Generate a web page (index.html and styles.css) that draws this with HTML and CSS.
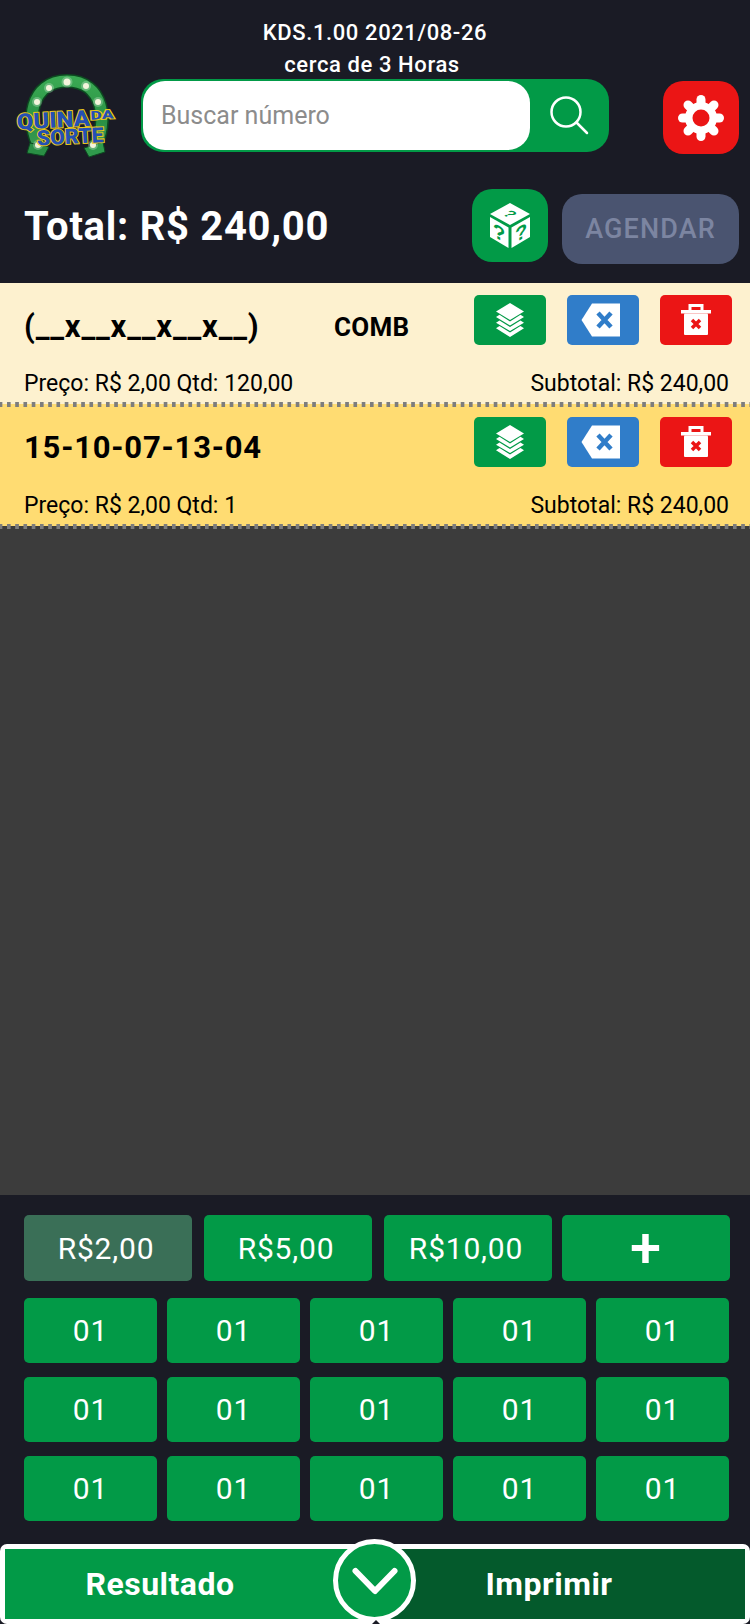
FILE: index.html
```html
<!DOCTYPE html>
<html lang="pt-BR">
<head>
    <meta charset="UTF-8">
    <meta name="viewport" content="width=device-width, initial-scale=1.0">
    <title>Quina da Sorte</title>
    <link rel="stylesheet" href="styles.css">
</head>
<body>
    <header class="header">
        <div class="version">
            <div>KDS.1.00 2021/08-26</div>
            <div class="version-sub">cerca de 3 Horas</div>
        </div>

        <div class="search-row">
            <svg class="logo" viewBox="0 0 100 85">
                <defs>
                    <linearGradient id="shoe" x1="0" y1="0" x2="0" y2="1">
                        <stop offset="0" stop-color="#39a852"/>
                        <stop offset="0.6" stop-color="#2a9145"/>
                        <stop offset="1" stop-color="#3a9a55"/>
                    </linearGradient>
                </defs>
                <path d="M24 75 C9 50 14 8 51 8 C88 8 93 50 78 75" fill="none" stroke="#0c4a20" stroke-width="14"/>
                <path d="M24 75 C9 50 14 8 51 8 C88 8 93 50 78 75" fill="none" stroke="url(#shoe)" stroke-width="11"/>
                <polygon points="14,70 33,74 28,83 11,80" fill="#2a8f45" stroke="#0c4a20"/>
                <polygon points="68,75 87,69 89,79 73,84" fill="#2f9a4c" stroke="#0c4a20"/>
                <g fill="#fff" opacity="0.25">
                    <circle cx="51" cy="9" r="5.5"/>
                    <circle cx="33" cy="15" r="5"/>
                    <circle cx="70" cy="13" r="5"/>
                    <circle cx="21" cy="29" r="5"/>
                    <circle cx="82" cy="29" r="5"/>
                    <circle cx="22" cy="72" r="5"/>
                    <circle cx="77" cy="72" r="5"/>
                </g>
                <g fill="#f4f4dc">
                    <circle cx="51" cy="9" r="3.5"/>
                    <circle cx="33" cy="15" r="3"/>
                    <circle cx="70" cy="13" r="3"/>
                    <circle cx="21" cy="29" r="3"/>
                    <circle cx="82" cy="29" r="3"/>
                    <circle cx="22" cy="72" r="3"/>
                    <circle cx="77" cy="72" r="3"/>
                </g>
                <g class="logo-text" transform="rotate(-3 50 50)">
                    <text x="1" y="54" textLength="73" lengthAdjust="spacingAndGlyphs" font-size="22">QUINA</text>
                    <text x="75" y="48" textLength="23" lengthAdjust="spacingAndGlyphs" font-size="12">DA</text>
                    <text x="20" y="71" textLength="67" lengthAdjust="spacingAndGlyphs" font-size="21">SORTE</text>
                </g>
            </svg>

            <div class="search-box">
                <div class="search-input">Buscar número</div>
                <button class="search-btn">
                    <svg width="44" height="44" viewBox="0 0 44 44" fill="none" stroke="#fff" stroke-width="2.5" stroke-linecap="round">
                        <circle cx="18" cy="18" r="14.5"/>
                        <path d="M28.5 28.5 L39 39"/>
                    </svg>
                </button>
            </div>

            <button class="gear-btn">
                <svg width="46" height="46" viewBox="-23 -23 46 46">
                    <circle r="16" fill="#fff"/>
                    <g stroke="#fff" stroke-width="9" stroke-linecap="round">
                        <path d="M0 -18.5 V18.5"/>
                        <path d="M-18.5 0 H18.5"/>
                        <path d="M-13 -13 L13 13"/>
                        <path d="M-13 13 L13 -13"/>
                    </g>
                    <circle r="8.5" fill="#eb1515"/>
                </svg>
            </button>
        </div>

        <div class="total-row">
            <div class="total">Total: R$ 240,00</div>
            <button class="dice-btn">
                <svg width="40" height="45" viewBox="0 0 40 45">
                    <polygon points="20,0 40,11 20,22 0,11" fill="#fff"/>
                    <polygon points="0,14 18.5,24.5 18.5,45 0,34" fill="#fff"/>
                    <polygon points="21.5,24.5 40,14 40,34 21.5,45" fill="#fff"/>
                    <g class="dice-marks">
                        <text font-size="14" transform="matrix(0.9 0.5 -0.9 0.5 15.5 13.5)">?</text>
                        <text font-size="20" transform="matrix(1 0.55 0 1 9 36.5)">?</text>
                        <text font-size="20" transform="matrix(1 -0.55 0 1 31 36.5)">?</text>
                    </g>
                </svg>
            </button>
            <button class="agendar-btn">AGENDAR</button>
        </div>
    </header>

    <section class="bet bet-light">
        <div class="bet-top">
            <div class="bet-number">(__x__x__x__x__)</div>
            <div class="bet-tag">COMB</div>
            <div class="bet-actions">
                <button class="act act-green">
                    <svg width="30" height="34" viewBox="0 0 30 34" fill="#fff">
                        <polygon points="15,0 29,8.5 15,17 1,8.5"/>
                        <path d="M4.5 11.8 L15 18.5 L25.5 11.8 L29 14 L15 22.5 L1 14 Z"/>
                        <path d="M4.5 17.5 L15 24 L25.5 17.5 L29 19.7 L15 28 L1 19.7 Z"/>
                        <path d="M4.5 23 L15 29.5 L25.5 23 L29 25.2 L15 34 L1 25.2 Z"/>
                    </svg>
                </button>
                <button class="act act-blue">
                    <svg width="40" height="34" viewBox="0 0 40 34">
                        <polygon points="11,0.5 39,0.5 39,33.5 11,33.5 0.5,17" fill="#fff"/>
                        <path d="M17 10 L30 24 M30 10 L17 24" stroke="#307dc9" stroke-width="4.5" fill="none"/>
                    </svg>
                </button>
                <button class="act act-red">
                    <svg width="30" height="32" viewBox="0 0 30 32">
                        <path d="M9 7 V1.5 H21 V7" fill="none" stroke="#fff" stroke-width="3"/>
                        <rect x="0" y="6" width="30" height="3.5" fill="#fff"/>
                        <rect x="3" y="9.5" width="24" height="21.5" rx="1" fill="#fff"/>
                        <path d="M11 16 L19 24 M19 16 L11 24" stroke="#eb1515" stroke-width="3.5" fill="none"/>
                    </svg>
                </button>
            </div>
        </div>
        <div class="bet-info">
            <span>Preço: R$ 2,00 Qtd: 120,00</span>
            <span>Subtotal: R$ 240,00</span>
        </div>
    </section>

    <section class="bet bet-dark">
        <div class="bet-top">
            <div class="bet-number">15-10-07-13-04</div>
            <div class="bet-actions">
                <button class="act act-green">
                    <svg width="30" height="34" viewBox="0 0 30 34" fill="#fff">
                        <polygon points="15,0 29,8.5 15,17 1,8.5"/>
                        <path d="M4.5 11.8 L15 18.5 L25.5 11.8 L29 14 L15 22.5 L1 14 Z"/>
                        <path d="M4.5 17.5 L15 24 L25.5 17.5 L29 19.7 L15 28 L1 19.7 Z"/>
                        <path d="M4.5 23 L15 29.5 L25.5 23 L29 25.2 L15 34 L1 25.2 Z"/>
                    </svg>
                </button>
                <button class="act act-blue">
                    <svg width="40" height="34" viewBox="0 0 40 34">
                        <polygon points="11,0.5 39,0.5 39,33.5 11,33.5 0.5,17" fill="#fff"/>
                        <path d="M17 10 L30 24 M30 10 L17 24" stroke="#307dc9" stroke-width="4.5" fill="none"/>
                    </svg>
                </button>
                <button class="act act-red">
                    <svg width="30" height="32" viewBox="0 0 30 32">
                        <path d="M9 7 V1.5 H21 V7" fill="none" stroke="#fff" stroke-width="3"/>
                        <rect x="0" y="6" width="30" height="3.5" fill="#fff"/>
                        <rect x="3" y="9.5" width="24" height="21.5" rx="1" fill="#fff"/>
                        <path d="M11 16 L19 24 M19 16 L11 24" stroke="#eb1515" stroke-width="3.5" fill="none"/>
                    </svg>
                </button>
            </div>
        </div>
        <div class="bet-info">
            <span>Preço: R$ 2,00 Qtd: 1</span>
            <span>Subtotal: R$ 240,00</span>
        </div>
    </section>

    <main class="empty"></main>

    <section class="keypad">
        <div class="amounts">
            <button class="key">R$2,00</button>
            <button class="key">R$5,00</button>
            <button class="key">R$10,00</button>
            <button class="key key-plus">+</button>
        </div>
        <div class="numbers">
            <button class="key">01</button>
            <button class="key">01</button>
            <button class="key">01</button>
            <button class="key">01</button>
            <button class="key">01</button>
            <button class="key">01</button>
            <button class="key">01</button>
            <button class="key">01</button>
            <button class="key">01</button>
            <button class="key">01</button>
            <button class="key">01</button>
            <button class="key">01</button>
            <button class="key">01</button>
            <button class="key">01</button>
            <button class="key">01</button>
        </div>
    </section>

    <footer class="footer">
        <button class="foot-btn foot-result">Resultado</button>
        <button class="foot-btn foot-print">Imprimir</button>
        <button class="toggle">
            <svg width="46" height="30" viewBox="0 0 46 30" fill="none" stroke="#fff" stroke-width="6" stroke-linecap="round" stroke-linejoin="round">
                <path d="M3.5 4 L23 24 L42.5 4"/>
            </svg>
        </button>
    </footer>
</body>
</html>
```

FILE: styles.css
```css
/* General Styling */
* {
    box-sizing: border-box;
}

body {
    font-family: Roboto, "Liberation Sans", sans-serif;
    margin: 0;
    padding: 0;
    width: 750px;
    height: 1624px;
    overflow: hidden;
    display: flex;
    flex-direction: column;
    background-color: #1a1b25;
    color: #000;
}

button {
    font-family: inherit;
    border: none;
    padding: 0;
    display: flex;
    align-items: center;
    justify-content: center;
}

/* Header */
.header {
    height: 283px;
    padding-top: 17px;
    background-color: #1a1b25;
    color: #fff;
}

.version {
    font-size: 22px;
    font-weight: 500;
    line-height: 32px;
    letter-spacing: 0.6px;
    text-align: center;
    margin-bottom: -8px;
}

.version-sub {
    padding-right: 6px;
}

.search-row {
    display: flex;
    align-items: center;
    height: 85px;
    padding-left: 16px;
}

.logo {
    width: 100px;
    height: 85px;
    overflow: visible;
}

.logo-text text {
    font-family: Roboto, sans-serif;
    font-weight: 900;
    fill: #2450b4;
    stroke: #e8c81e;
    stroke-width: 2px;
    paint-order: stroke;
}

.search-box {
    margin-left: 25px;
    width: 468px;
    height: 73px;
    display: flex;
    background-color: #029a47;
    border-radius: 22px;
    padding: 2px 0 2px 2px;
}

.search-input {
    width: 387px;
    display: flex;
    align-items: center;
    padding-left: 18px;
    background-color: #fff;
    border-radius: 22px;
    font-size: 25px;
    color: #8c8c8c;
}

.search-btn {
    flex: 1;
    background: none;
}

.gear-btn {
    margin-left: 54px;
    margin-top: 4px;
    width: 76px;
    height: 73px;
    background-color: #eb1515;
    border-radius: 20px;
}

.total-row {
    display: flex;
    align-items: flex-start;
    margin-top: 31px;
    padding: 0 11px 0 24px;
}

.total {
    flex: 1;
    font-size: 40px;
    font-weight: 700;
    letter-spacing: 0.7px;
    line-height: 75px;
}

.dice-btn {
    width: 76px;
    height: 73px;
    background-color: #029a47;
    border-radius: 20px;
}

.dice-marks text {
    font-family: "Liberation Sans", sans-serif;
    font-weight: bold;
    fill: #029a47;
    text-anchor: middle;
}

.agendar-btn {
    margin-left: 14px;
    margin-top: 5px;
    width: 177px;
    height: 70px;
    background-color: #4a5470;
    border-radius: 20px;
    color: #7c85a1;
    font-size: 27px;
    font-weight: 500;
    letter-spacing: 1.1px;
}

/* Bets */
.bet {
    position: relative;
    height: 124px;
    padding: 12px 18px 0 24px;
    background-repeat: repeat-x, no-repeat;
    background-size: 8.25px 5px, 100% 3px;
    background-position: -1.3px bottom, left bottom;
}

.bet-light {
    background-color: #fdf1cf;
    background-image: linear-gradient(90deg, #7d7d7d 4px, transparent 4px), linear-gradient(#ffdc72, #ffdc72);
}

.bet-dark {
    height: 122px;
    padding-top: 10px;
    background-color: #ffdc72;
    background-image: linear-gradient(90deg, #7d7d7d 4px, transparent 4px), linear-gradient(#3c3c3c, #3c3c3c);
}

.bet-top {
    display: flex;
    align-items: center;
    height: 50px;
}

.bet-number {
    font-size: 31px;
    font-weight: 700;
    letter-spacing: 0.8px;
    margin-top: 13px;
}

.bet-dark .bet-number {
    margin-top: 10px;
}

.bet-tag {
    position: absolute;
    left: 334px;
    top: 29px;
    font-size: 26px;
    font-weight: 700;
    letter-spacing: 0.3px;
}

.bet-actions {
    margin-left: auto;
    display: flex;
    gap: 21px;
}

.act {
    width: 72px;
    height: 50px;
    border-radius: 5px;
}

.act-green {
    background-color: #029a47;
}

.act-blue {
    background-color: #307dc9;
    padding-right: 5px;
}

.act-red {
    background-color: #eb1515;
}

.bet-info {
    display: flex;
    justify-content: space-between;
    margin-top: 22px;
    padding-right: 3px;
    font-size: 23px;
    line-height: 34px;
}

/* Empty middle */
.empty {
    flex: 1;
    background-color: #3c3c3c;
}

/* Keypad */
.keypad {
    height: 349px;
    padding: 20px 21px 0 24px;
    background-color: #1a1b25;
}

.key {
    background-color: #029a47;
    color: #fff;
    border-radius: 5px;
    font-size: 30px;
    letter-spacing: 0.8px;
}

.amounts {
    display: grid;
    grid-template-columns: repeat(4, 168px);
    grid-auto-rows: 66px;
    column-gap: 12px;
}

.amounts .key {
    padding-right: 4px;
}

.amounts .key:first-child {
    background-color: #3a6f57;
}

.amounts .key-plus {
    margin: 0 2px 0 -2px;
    padding-right: 0;
    font-size: 56px;
    font-weight: 500;
}

.numbers {
    display: grid;
    grid-template-columns: repeat(5, 1fr);
    grid-auto-rows: 65px;
    column-gap: 10px;
    row-gap: 14px;
    margin-top: 17px;
}

/* Footer */
.footer {
    position: relative;
    height: 80px;
    display: flex;
    background-color: #fff;
    border-radius: 7px;
    padding: 5px;
}

.foot-btn {
    flex: 0 0 370px;
    color: #fff;
    font-size: 32px;
    font-weight: 700;
    letter-spacing: 0.5px;
}

.foot-result {
    background-color: #029a47;
    padding-right: 60px;
}

.foot-print {
    background-color: #045a2c;
    padding-right: 22px;
}

.toggle {
    position: absolute;
    left: 333px;
    top: -5px;
    width: 83px;
    height: 83px;
    border-radius: 50%;
    border: 5px solid #fff;
    background-color: #029a47;
    padding-top: 2px;
}

.toggle::after {
    content: "";
    position: absolute;
    left: 34px;
    bottom: -7px;
    border: 4px solid transparent;
    border-bottom-color: #1a1b25;
}
```
